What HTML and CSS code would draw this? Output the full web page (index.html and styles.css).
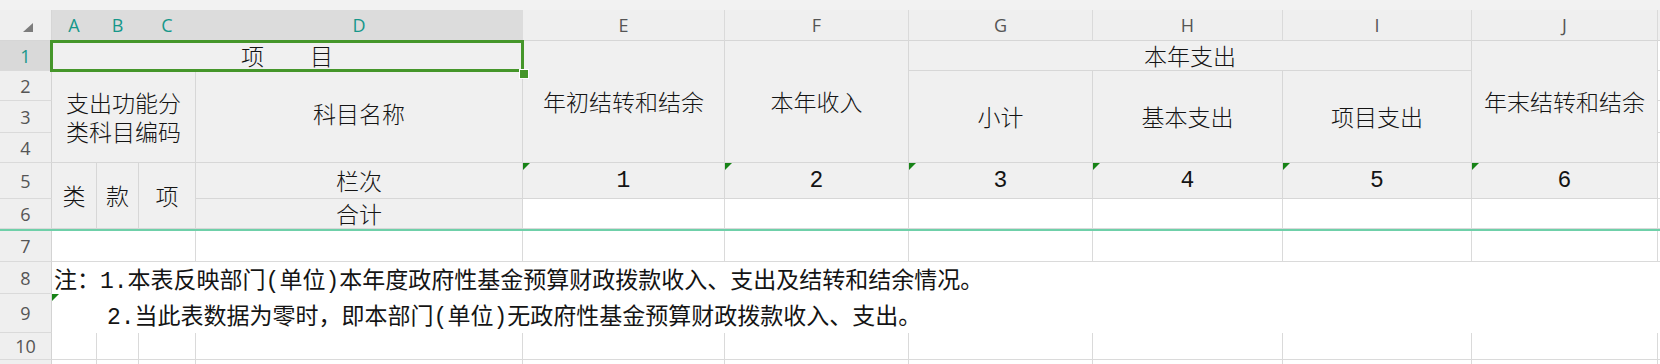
FILE: index.html
```html
<!DOCTYPE html>
<html lang="zh-CN">
<head>
<meta charset="utf-8">
<title>政府性基金预算财政拨款收入支出决算表</title>
<link rel="stylesheet" href="styles.css">
</head>
<body>
<div class="app">
  <div class="topbar"></div>
  <div class="sheet">
    <!-- column headers -->
    <div class="corner"><span class="corner-tri"></span></div>
    <div class="colh sel">A</div>
    <div class="colh sel">B</div>
    <div class="colh sel">C</div>
    <div class="colh sel">D</div>
    <div class="colh">E</div>
    <div class="colh">F</div>
    <div class="colh">G</div>
    <div class="colh">H</div>
    <div class="colh">I</div>
    <div class="colh">J</div>
    <div class="colh k"></div>

    <!-- row 1 -->
    <div class="rowh sel">1</div>
    <div class="cell hd cs4 picked">项　　目<span class="handle"></span></div>
    <div class="cell hd rs4">年初结转和结余</div>
    <div class="cell hd rs4">本年收入</div>
    <div class="cell hd cs3">本年支出</div>
    <div class="cell hd rs4">年末结转和结余</div>
    <div class="cell k"></div>

    <!-- row 2 -->
    <div class="rowh">2</div>
    <div class="cell hd cs3 rs3 wrap">支出功能分类科目编码</div>
    <div class="cell hd rs3 up">科目名称</div>
    <div class="cell hd rs3">小计</div>
    <div class="cell hd rs3">基本支出</div>
    <div class="cell hd rs3">项目支出</div>
    <div class="cell k"></div>

    <!-- row 3 -->
    <div class="rowh">3</div>
    <div class="cell k"></div>

    <!-- row 4 -->
    <div class="rowh">4</div>
    <div class="cell k"></div>

    <!-- row 5 -->
    <div class="rowh">5</div>
    <div class="cell hd rs2">类</div>
    <div class="cell hd rs2">款</div>
    <div class="cell hd rs2">项</div>
    <div class="cell hd">栏次</div>
    <div class="cell hd num mark">1</div>
    <div class="cell hd num mark">2</div>
    <div class="cell hd num mark">3</div>
    <div class="cell hd num mark">4</div>
    <div class="cell hd num mark">5</div>
    <div class="cell hd num mark">6</div>
    <div class="cell k"></div>

    <!-- row 6 -->
    <div class="rowh">6</div>
    <div class="cell hd">合计</div>
    <div class="cell"></div>
    <div class="cell"></div>
    <div class="cell"></div>
    <div class="cell"></div>
    <div class="cell"></div>
    <div class="cell"></div>
    <div class="cell k"></div>

    <!-- frozen pane divider -->
    <div class="freeze"></div>

    <!-- row 7 -->
    <div class="rowh">7</div>
    <div class="cell cs3"></div>
    <div class="cell"></div>
    <div class="cell"></div>
    <div class="cell"></div>
    <div class="cell"></div>
    <div class="cell"></div>
    <div class="cell"></div>
    <div class="cell"></div>
    <div class="cell k"></div>

    <!-- row 8 -->
    <div class="rowh">8</div>
    <div class="note">注：1.本表反映部门(单位)本年度政府性基金预算财政拨款收入、支出及结转和结余情况。</div>

    <!-- row 9 -->
    <div class="rowh">9</div>
    <div class="note indent mark">2.当此表数据为零时，即本部门(单位)无政府性基金预算财政拨款收入、支出。</div>

    <!-- row 10 -->
    <div class="rowh">10</div>
    <div class="cell"></div>
    <div class="cell"></div>
    <div class="cell"></div>
    <div class="cell"></div>
    <div class="cell"></div>
    <div class="cell"></div>
    <div class="cell"></div>
    <div class="cell"></div>
    <div class="cell"></div>
    <div class="cell"></div>
    <div class="cell k"></div>

    <!-- next row, only its top edge is in view -->
    <div class="rowh"></div>
    <div class="cell"></div>
    <div class="cell"></div>
    <div class="cell"></div>
    <div class="cell"></div>
    <div class="cell"></div>
    <div class="cell"></div>
    <div class="cell"></div>
    <div class="cell"></div>
    <div class="cell"></div>
    <div class="cell"></div>
    <div class="cell k"></div>
  </div>
</div>
</body>
</html>
```

FILE: styles.css
```css
html, body {
  margin: 0;
  padding: 0;
}

body {
  width: 1660px;
  height: 364px;
  overflow: hidden;
  background: #f2f2f2;
  font-family: "Noto Sans CJK SC", "Noto Sans", sans-serif;
  color: #141414;
}

.app {
  display: flex;
  flex-direction: column;
}

.topbar {
  height: 10px;
  background: #f2f2f2;
}

.sheet {
  display: grid;
  grid-template-columns: 52px 45px 42px 57px 327px 202px 184px 184px 190px 189px 186px 1fr;
  grid-template-rows: 31px 30px 30px 32px 30px 36px 30px 2px 31px 32px 39px 27px 30px;
  background: #ffffff;
}

/* ---------- headers ---------- */
.corner,
.colh,
.rowh {
  box-sizing: border-box;
  display: flex;
  align-items: center;
  justify-content: center;
  background: #efefef;
  color: #555555;
}

.corner {
  border-right: 1px solid #d6d6d6;
  border-bottom: 1px solid #d6d6d6;
}

.corner-tri {
  width: 0;
  height: 0;
  margin: 4px 0 0 4px;
  border-left: 10px solid transparent;
  border-bottom: 9px solid #7c7c7c;
}

.colh {
  font-family: "Open Sans", "Noto Sans", sans-serif;
  font-size: 18px;
  border-right: 1px solid #dadada;
  border-bottom: 1px solid #d6d6d6;
}

.colh.sel {
  background: #dcdcdc;
  color: #16978a;
  border-right-color: #dcdcdc;
}

.colh.k {
  border-right: none;
}

.rowh {
  grid-column: 1;
  font-family: "Open Sans", "Noto Sans", sans-serif;
  font-size: 18px;
  border-right: 1px solid #d3d3d3;
  border-bottom: 1px solid #dadada;
}

.rowh.sel {
  background: #d9d9d9;
  color: #16978a;
}

/* ---------- cells ---------- */
.cell {
  position: relative;
  box-sizing: border-box;
  display: flex;
  align-items: center;
  justify-content: center;
  text-align: center;
  font-size: 23px;
  line-height: 29px;
  font-weight: 300;
  background: #ffffff;
  border-right: 1px solid #dadada;
  border-bottom: 1px solid #dadada;
}

.cell.hd {
  background: #f0f0f0;
  border-color: #d7d7d7;
}

.cell.k {
  grid-column: 12;
  border-right: none;
}

.cs3 { grid-column: span 3; }
.cs4 { grid-column: span 4; }
.rs2 { grid-row: span 2; }
.rs3 { grid-row: span 3; }
.rs4 { grid-row: span 4; }

.wrap {
  padding: 0 12px;
}

.up {
  padding-bottom: 6px;
}

.num {
  font-family: "Liberation Mono", "Noto Sans CJK SC", monospace;
  font-weight: 400;
  font-size: 23px;
  padding-top: 2px;
}

/* green "number stored as text" flag */
.mark::before {
  content: "";
  position: absolute;
  left: 0;
  top: 0;
  width: 0;
  height: 0;
  border-top: 7px solid #178317;
  border-right: 7px solid transparent;
}

/* active selection box with fill handle, drawn above neighbouring cells */
.picked {
  z-index: 3;
}

.picked::after {
  content: "";
  position: absolute;
  top: -1px;
  left: -2px;
  right: -2px;
  bottom: -2px;
  border: 3px solid #45962a;
  pointer-events: none;
}

.handle {
  position: absolute;
  right: -6px;
  bottom: -8px;
  width: 8px;
  height: 8px;
  background: #45962a;
  box-shadow: 0 0 0 1px #ffffff;
  z-index: 2;
}

/* frozen pane divider line */
.freeze {
  grid-column: 1 / -1;
  background: #6fd0a9;
}

/* ---------- notes ---------- */
.note {
  position: relative;
  grid-column: span 11;
  display: flex;
  align-items: center;
  padding-left: 2px;
  font-family: "Liberation Mono", "Noto Sans CJK SC", monospace;
  font-size: 23px;
  white-space: nowrap;
  background: #ffffff;
}

.note.indent {
  padding-left: 55px;
}
```
